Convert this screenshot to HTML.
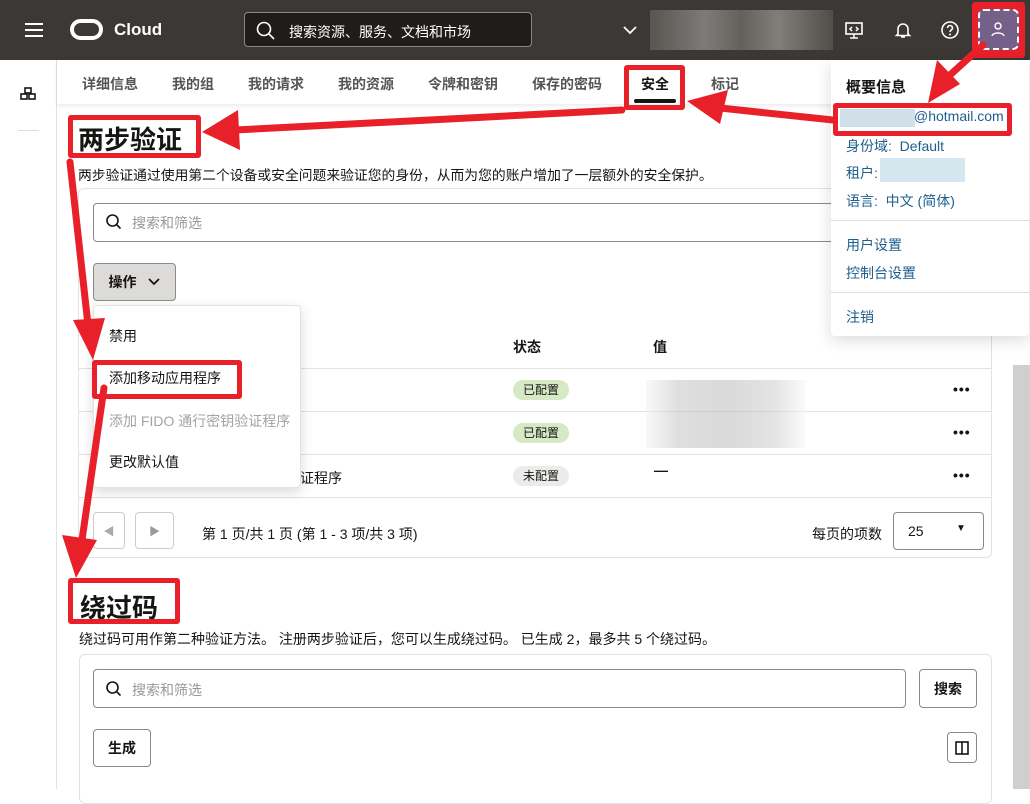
<!DOCTYPE html>
<html><head><meta charset="utf-8"><style>
*{box-sizing:border-box;margin:0;padding:0}
body{width:1030px;height:789px;overflow:hidden;position:relative;background:#fff;font-family:"Liberation Sans","Noto Sans CJK SC",sans-serif;color:#161513;font-size:14px}
.a{position:absolute}
.top{left:0;top:0;width:1030px;height:60px;background:#3b3835}
.side{left:0;top:60px;width:57px;height:729px;border-right:1px solid #e4e2e0;background:#fff}
.tabs{left:57px;top:60px;width:973px;height:44px;box-shadow:0 2px 4px rgba(0,0,0,.08);background:#fff}
.tab{position:absolute;top:14px;font-size:14px;font-weight:bold;color:#555}
.card{border:1px solid #e4e2e0;border-radius:6px;background:#fff}
.inp{border:1px solid #8b8986;border-radius:4px;background:#fff}
.ph{color:#9a9895;font-size:14px}
.btn{border:1px solid #8b8986;border-radius:4px;background:#fff;font-weight:bold;font-size:14px;display:flex;align-items:center;justify-content:center}
.row{left:79px;width:912px;height:43px;border-top:1px solid #e4e2e0}
.pill{position:absolute;height:20px;border-radius:10px;font-size:12px;padding:0 10px;line-height:20px}
.dots{position:absolute;left:874px;top:12px;font-weight:bold;font-size:14px;letter-spacing:1px}
.red{border:5px solid #e8202a;border-radius:3px}
.blue{color:#1c5f8c}
</style></head><body>
<div class="a top"></div>
<div class="a" style="left:25px;top:23px;width:18px;height:2px;background:#fff;box-shadow:0 6px 0 #fff,0 12px 0 #fff"></div>
<div class="a" style="left:70px;top:19px;width:33px;height:21px;border:4px solid #fff;border-radius:11px"></div>
<div class="a" style="left:114px;top:20px;color:#fff;font-size:17px;font-weight:bold">Cloud</div>
<div class="a" style="left:244px;top:12px;width:288px;height:35px;border:1px solid #8a8783;border-radius:4px;background:#1f1d1b"></div>
<svg class="a" style="left:256px;top:21px" width="20" height="20"><circle cx="8" cy="8" r="6.5" stroke="#fff" stroke-width="1.6" fill="none"/><path d="M13 13l5 5" stroke="#fff" stroke-width="1.6"/></svg>
<div class="a" style="left:289px;top:22px;color:#fff;font-size:14px">搜索资源、服务、文档和市场</div>
<svg class="a" style="left:622px;top:24px" width="16" height="12"><path d="M2 3l6 6 6-6" stroke="#fff" stroke-width="1.8" fill="none"/></svg>
<div class="a" style="left:650px;top:10px;width:183px;height:40px;background:linear-gradient(90deg,#5e5a56,#8a8683 30%,#6b6864 50%,#8e8b87 70%,#55514d);opacity:.85"></div>
<svg class="a" style="left:844px;top:20px" width="20" height="20"><rect x="2" y="3" width="16" height="11" stroke="#fff" stroke-width="1.6" fill="none"/><path d="M10 14v4M6 18h8M8 7l-2 2 2 2M12 7l2 2-2 2" stroke="#fff" stroke-width="1.5" fill="none"/></svg>
<svg class="a" style="left:893px;top:20px" width="20" height="20"><path d="M5 14V9a5 5 0 0110 0v5l1.5 1.5h-13z M8 17h4" stroke="#fff" stroke-width="1.6" fill="none"/></svg>
<svg class="a" style="left:940px;top:20px" width="20" height="20"><circle cx="10" cy="10" r="8" stroke="#fff" stroke-width="1.6" fill="none"/><path d="M7.5 8a2.5 2.5 0 115 0c0 2-2.5 2-2.5 4" stroke="#fff" stroke-width="1.6" fill="none"/><circle cx="10" cy="14.5" r="1" fill="#fff"/></svg>
<div class="a" style="left:972px;top:2px;width:53px;height:56px;background:#e8202a;border-radius:3px"></div>
<div class="a" style="left:978px;top:9px;width:41px;height:41px;background:#75608a;border:2px dashed #fff;border-radius:6px"></div>
<svg class="a" style="left:988px;top:20px" width="20" height="20"><circle cx="10" cy="6" r="3" stroke="#fff" stroke-width="1.4" fill="none"/><path d="M4 16c1-4 11-4 12 0" stroke="#fff" stroke-width="1.4" fill="none"/></svg>

<div class="a side"></div>
<svg class="a" style="left:19px;top:86px" width="19" height="18"><g stroke="#161513" stroke-width="1.6" fill="none"><rect x="6" y="2" width="6" height="5"/><rect x="2" y="8" width="6" height="5"/><rect x="10" y="8" width="6" height="5"/></g></svg>
<div class="a" style="left:18px;top:130px;width:21px;height:1px;background:#ddd"></div>

<div class="a tabs">
<span class="tab" style="left:25px">详细信息</span>
<span class="tab" style="left:115px">我的组</span>
<span class="tab" style="left:191px">我的请求</span>
<span class="tab" style="left:281px">我的资源</span>
<span class="tab" style="left:371px">令牌和密钥</span>
<span class="tab" style="left:475px">保存的密码</span>
<span class="tab" style="left:584px;color:#161513">安全</span>
<span class="tab" style="left:654px">标记</span>
</div>
<div class="a" style="left:634px;top:99px;width:42px;height:4px;background:#161513;border-radius:2px"></div>
<div class="a red" style="left:624px;top:65px;width:61px;height:45px"></div>

<div class="a" style="left:78px;top:120px;font-size:26px;font-weight:bold">两步验证</div>
<div class="a red" style="left:68px;top:115px;width:133px;height:43px"></div>
<div class="a" style="left:78px;top:164px;font-size:13.8px">两步验证通过使用第二个设备或安全问题来验证您的身份，从而为您的账户增加了一层额外的安全保护。</div>

<div class="a card" style="left:78px;top:188px;width:914px;height:370px"></div>
<div class="a inp" style="left:93px;top:203px;width:890px;height:39px"></div>
<svg class="a" style="left:105px;top:213px" width="18" height="18"><circle cx="7.5" cy="7.5" r="5.5" stroke="#161513" stroke-width="1.6" fill="none"/><path d="M11.5 11.5l4 4" stroke="#161513" stroke-width="1.6"/></svg>
<div class="a ph" style="left:132px;top:213px">搜索和筛选</div>
<div class="a btn" style="left:93px;top:263px;width:83px;height:38px;background:#dcdbd9;gap:10px">操作 <svg width="14" height="10"><path d="M2 2l5 5 5-5" stroke="#161513" stroke-width="1.8" fill="none"/></svg></div>

<div class="a" style="left:513px;top:337px;font-weight:bold">状态</div>
<div class="a" style="left:653px;top:337px;font-weight:bold">值</div>
<div class="a row" style="top:368px"><span class="pill" style="left:434px;top:11px;background:#d4e9c4">已配置</span><span class="dots">•••</span></div>
<div class="a row" style="top:411px"><span class="pill" style="left:434px;top:11px;background:#d4e9c4">已配置</span><span class="dots">•••</span></div>
<div class="a row" style="top:454px"><span class="a" style="left:221px;top:13px">证程序</span><span class="pill" style="left:434px;top:11px;background:#ecebe9">未配置</span><span class="a" style="left:575px;top:7px;font-weight:bold">—</span><span class="dots">•••</span></div>
<div class="a row" style="top:497px;height:0"></div>
<div class="a" style="left:646px;top:380px;width:160px;height:68px;background:linear-gradient(90deg,#f4f4f4,#c4c4c4 20%,#bbb 50%,#ccc 80%,#f8f8f8);opacity:.55"></div>
<div class="a btn" style="left:93px;top:512px;width:32px;height:37px;border-color:#ccc;color:#aaa;font-size:11px">◀</div>
<div class="a btn" style="left:135px;top:512px;width:39px;height:37px;border-color:#ccc;color:#999;font-size:11px">▶</div>
<div class="a" style="left:202px;top:524px">第 1 页/共 1 页 (第 1 - 3 项/共 3 项)</div>
<div class="a" style="left:812px;top:524px">每页的项数</div>
<div class="a inp" style="left:893px;top:512px;width:91px;height:38px"><span class="a" style="left:14px;top:10px">25</span><span class="a" style="left:62px;top:10px;font-size:10px">▼</span></div>

<div class="a" style="left:93px;top:305px;width:208px;height:183px;background:#fff;border:1px solid #e4e2e0;border-radius:4px;box-shadow:0 4px 12px rgba(0,0,0,.15)">
<span class="a" style="left:15px;top:20px">禁用</span>
<span class="a" style="left:15px;top:62px">添加移动应用程序</span>
<span class="a" style="left:15px;top:105px;color:#a5a3a0">添加 FIDO 通行密钥验证程序</span>
<span class="a" style="left:15px;top:146px">更改默认值</span>
</div>
<div class="a red" style="left:92px;top:360px;width:150px;height:39px"></div>

<div class="a" style="left:80px;top:588px;font-size:26px;font-weight:bold">绕过码</div>
<div class="a red" style="left:68px;top:578px;width:112px;height:46px"></div>
<div class="a" style="left:79px;top:629px">绕过码可用作第二种验证方法。 注册两步验证后，您可以生成绕过码。 已生成 2，最多共 5 个绕过码。</div>
<div class="a card" style="left:79px;top:654px;width:913px;height:150px"></div>
<div class="a inp" style="left:93px;top:669px;width:813px;height:39px"></div>
<svg class="a" style="left:105px;top:680px" width="18" height="18"><circle cx="7.5" cy="7.5" r="5.5" stroke="#161513" stroke-width="1.6" fill="none"/><path d="M11.5 11.5l4 4" stroke="#161513" stroke-width="1.6"/></svg>
<div class="a ph" style="left:132px;top:680px">搜索和筛选</div>
<div class="a btn" style="left:919px;top:669px;width:58px;height:39px">搜索</div>
<div class="a btn" style="left:93px;top:729px;width:58px;height:38px">生成</div>
<div class="a btn" style="left:947px;top:732px;width:30px;height:31px"><svg width="14" height="14"><rect x="1" y="1" width="12" height="12" stroke="#161513" stroke-width="1.6" fill="none"/><path d="M7 1v12" stroke="#161513" stroke-width="1.6"/></svg></div>

<div class="a" style="left:1013px;top:365px;width:17px;height:424px;background:#cfcfcf"></div>

<div class="a" style="left:831px;top:60px;width:198px;height:276px;background:#fff;box-shadow:0 4px 16px rgba(0,0,0,.15);border-radius:0 0 4px 4px"></div>
<div class="a" style="left:846px;top:76px;font-size:15px;font-weight:bold">概要信息</div>
<div class="a" style="left:840px;top:109px;width:75px;height:18px;background:#cfe0e8"></div>
<div class="a blue" style="left:914px;top:108px">@hotmail.com</div>
<div class="a red" style="left:833px;top:103px;width:179px;height:33px"></div>
<div class="a blue" style="left:846px;top:136px">身份域:&nbsp; Default</div>
<div class="a blue" style="left:846px;top:163px">租户:</div>
<div class="a" style="left:880px;top:158px;width:85px;height:24px;background:#d6e6ee"></div>
<div class="a blue" style="left:846px;top:191px">语言:&nbsp; 中文 (简体)</div>
<div class="a" style="left:831px;top:220px;width:198px;height:1px;background:#ddd"></div>
<div class="a blue" style="left:846px;top:235px">用户设置</div>
<div class="a blue" style="left:846px;top:263px">控制台设置</div>
<div class="a" style="left:831px;top:292px;width:198px;height:1px;background:#ddd"></div>
<div class="a blue" style="left:846px;top:307px">注销</div>

<svg class="a" style="left:0;top:0" width="1030" height="789">
<g stroke="#e8202a" stroke-width="7" fill="none" stroke-linecap="round">
<path d="M983 45L950 75"/>
<path d="M833 120L720 108"/>
<path d="M622 110L235 130"/>
<path d="M70 162L88 325"/>
<path d="M104 388L82 540"/>
</g>
<g fill="#e8202a">
<path d="M928 103L937 60L960 84Z"/>
<path d="M687 101L728 90L720 124Z"/>
<path d="M202 132L238 110L240 150Z"/>
<path d="M93 360L73 320L105 318Z"/>
<path d="M76 578L62 535L97 540Z"/>
</g>
</svg>
</body></html>
